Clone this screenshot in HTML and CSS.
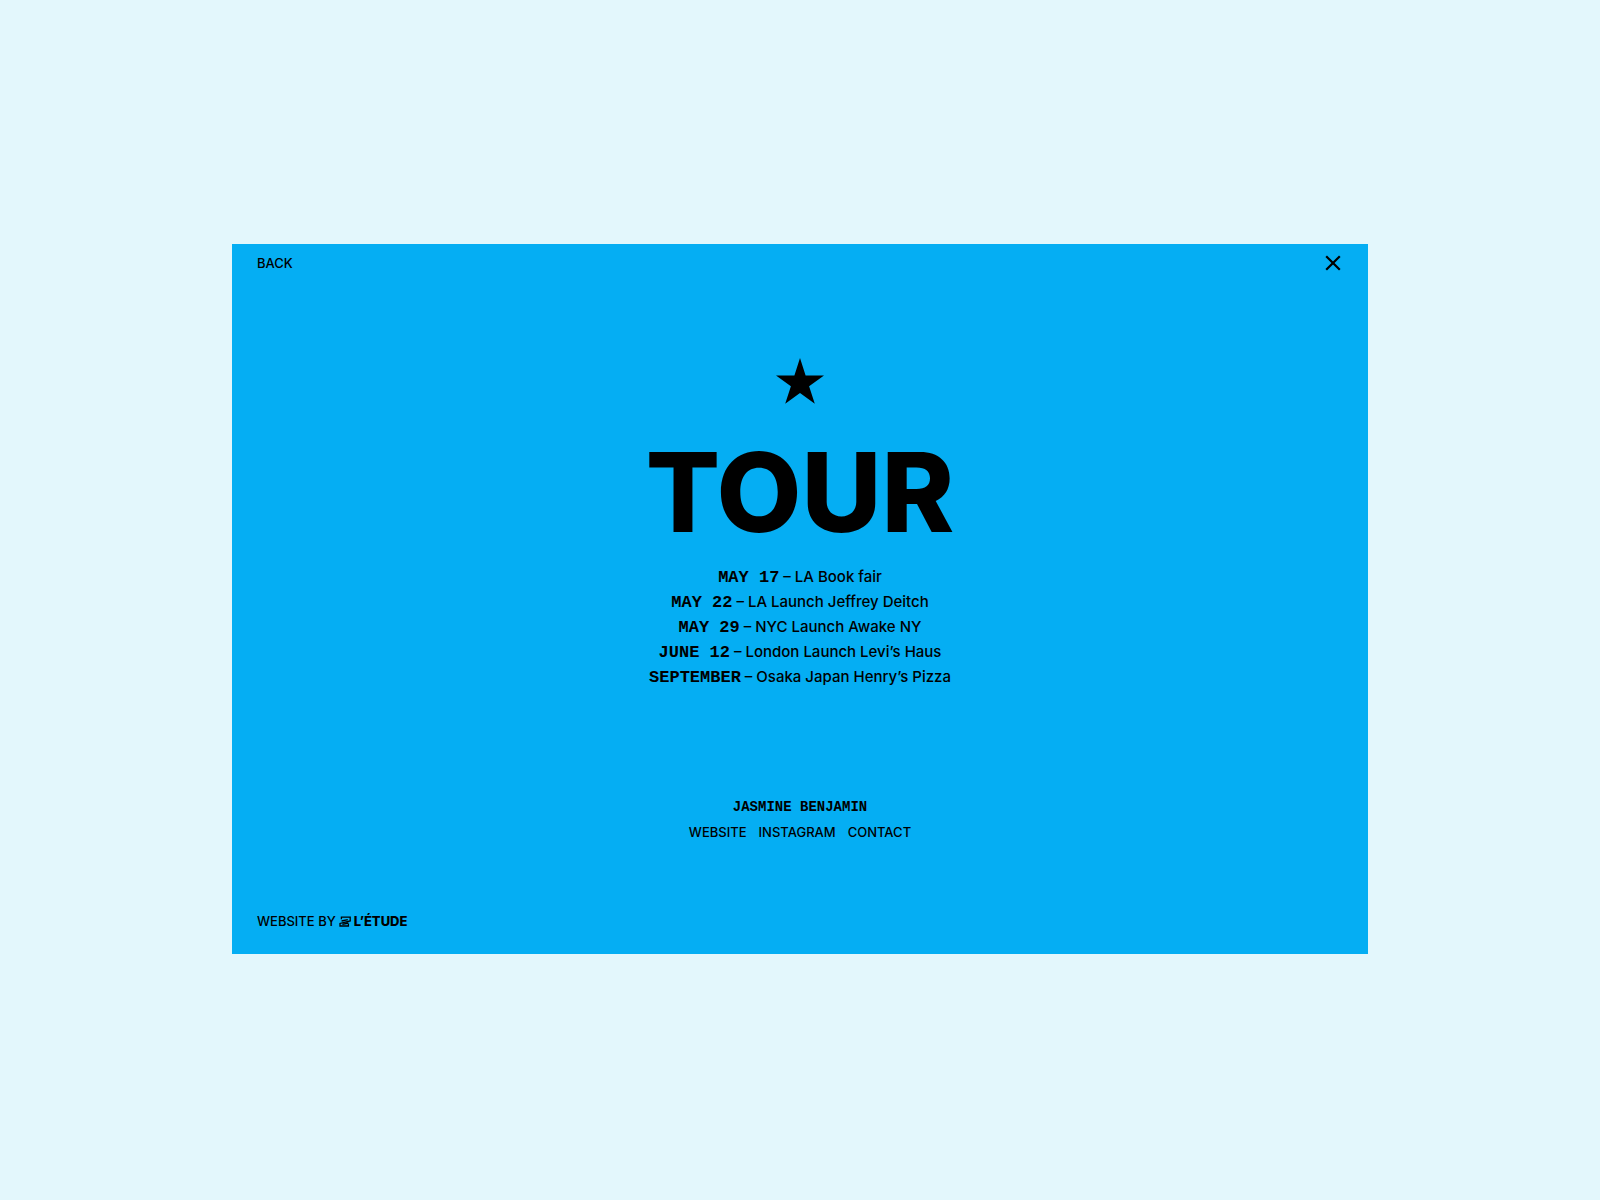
FILE: index.html
```html
<!DOCTYPE html>
<html lang="en">
<head>
<meta charset="utf-8">
<meta name="viewport" content="width=device-width, initial-scale=1">
<title>Tour – Jasmine Benjamin</title>
<link rel="stylesheet" href="styles.css">
</head>
<body>
<div class="panel">
  <header class="topbar">
    <a class="link" href="#back">BACK</a>
    <button class="close" type="button" aria-label="Close">
      <svg class="close-icon" viewBox="0 0 16 16" aria-hidden="true"><path d="M1.2 1.2L14.8 14.8M14.8 1.2L1.2 14.8" fill="none" stroke="currentColor" stroke-width="2.2"/></svg>
    </button>
  </header>
  <main class="content">
    <svg class="star" viewBox="0 0 48 46" aria-hidden="true"><path d="M24 0L29.6 17.5H48L33.1 28.3L38.8 45.8L24 35L9.2 45.8L14.9 28.3L0 17.5H18.4Z"/></svg>
    <h1 class="title">TOUR</h1>
    <ul class="dates">
      <li><time class="date">MAY 17</time> – LA Book fair</li>
      <li><time class="date">MAY 22</time> – LA Launch Jeffrey Deitch</li>
      <li><time class="date">MAY 29</time> – NYC Launch Awake NY</li>
      <li><time class="date">JUNE 12</time> – London Launch Levi’s Haus</li>
      <li><time class="date">SEPTEMBER</time> – Osaka Japan Henry’s Pizza</li>
    </ul>
    <p class="author">JASMINE BENJAMIN</p>
    <nav class="links">
      <a class="link" href="#website">WEBSITE</a>
      <a class="link" href="#instagram">INSTAGRAM</a>
      <a class="link" href="#contact">CONTACT</a>
    </nav>
  </main>
  <footer class="credit">
    <span>WEBSITE BY</span>
    <a class="studio" href="#letude">
      <svg class="studio-icon" viewBox="0 0 12 11" aria-hidden="true"><path d="M2.4 3.2V1.2H11.2V5L1 7.4V10H9.4V7.8M2.6 5L8.8 3.6M3.4 8.4L9.4 7" fill="none" stroke="currentColor" stroke-width="1.3"/></svg>
      <span>L’ÉTUDE</span>
    </a>
  </footer>
</div>
</body>
</html>
```
FILE: styles.css
```css
* {
  box-sizing: border-box;
}

body {
  margin: 0;
  padding-bottom: 2px;
  min-height: 100vh;
  display: flex;
  align-items: center;
  justify-content: center;
  background: #e3f7fc;
  color: #000;
  font-family: Inter, "Liberation Sans", sans-serif;
  font-size: 13px;
  line-height: 16px;
  font-weight: 500;
}

.panel {
  width: 71%;
  aspect-ratio: 8 / 5;
  display: flex;
  flex-direction: column;
  padding: 7px 25px 25px;
  background: #05aef3;
}

.topbar {
  display: flex;
  align-items: center;
  justify-content: space-between;
}

.link,
.studio {
  color: inherit;
  text-decoration: none;
}

.close {
  display: flex;
  padding: 4px 2px;
  border: 0;
  background: none;
  color: inherit;
}

.close-icon {
  width: 16px;
  height: 16px;
}

.content {
  flex: 1;
  display: flex;
  flex-direction: column;
  align-items: center;
  justify-content: center;
  padding-top: 9px;
}

.star {
  width: 48px;
  height: 46px;
}

.title {
  margin: 32px 0 16px;
  font-size: 110px;
  line-height: 112px;
  font-weight: 800;
}

.dates {
  margin: 0;
  padding: 0;
  list-style: none;
  text-align: center;
  font-size: 15px;
  line-height: 25px;
}

.date {
  font-family: "Liberation Mono", monospace;
  font-size: 17px;
  line-height: 16px;
  font-weight: 700;
}

.author {
  margin: 110px 0 9px;
  font-family: "Liberation Mono", monospace;
  font-size: 14px;
  font-weight: 700;
}

.links {
  display: flex;
  gap: 12px;
}

.credit,
.studio {
  display: flex;
  align-items: center;
  gap: 3px;
}

.studio {
  font-weight: 800;
}

.studio-icon {
  width: 12px;
  height: 11px;
}
```
